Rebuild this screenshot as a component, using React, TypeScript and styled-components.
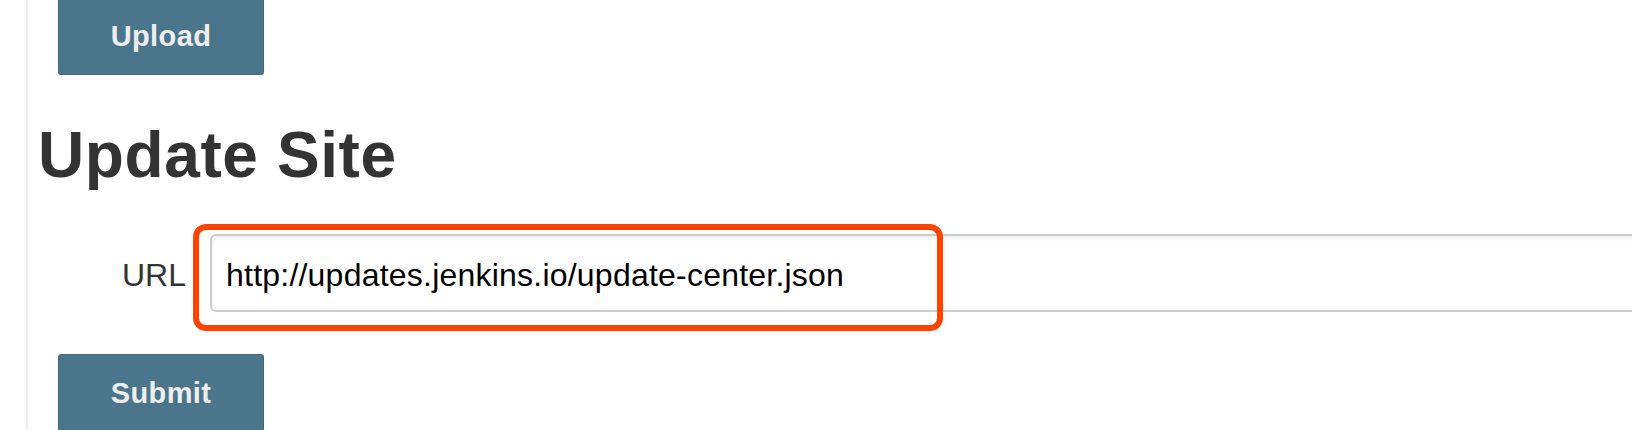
import React from "react";
import styled, { createGlobalStyle } from "styled-components";

const GlobalStyle = createGlobalStyle`
  html, body {
    margin: 0;
    padding: 0;
    background: #ffffff;
  }
  body {
    font-family: "Liberation Sans", Arial, Helvetica, sans-serif;
    overflow: hidden;
  }
`;

const Page = styled.div`
  height: 430px;
  overflow: hidden;
  padding-left: 26px;
  box-sizing: border-box;
`;

const Main = styled.main`
  height: 100%;
  border-left: 2px solid #eeeeee;
  padding-left: 10px;
  box-sizing: border-box;
  display: flex;
  flex-direction: column;
  align-items: flex-start;
`;

const Button = styled.button<{ $offset: number }>`
  box-sizing: border-box;
  width: 206px;
  height: 78px;
  flex: none;
  margin: ${(p) => p.$offset}px 0 0 20px;
  background: #4b758b;
  border: 1px solid #44697d;
  border-radius: 3px;
  color: #eeeeee;
  font-family: "Liberation Sans", Arial, Helvetica, sans-serif;
  font-weight: bold;
  font-size: 29px;
  letter-spacing: 0.4px;
  line-height: 32px;
  display: flex;
  align-items: center;
  justify-content: center;
  padding: 0;
  cursor: pointer;
`;

const Heading = styled.h1`
  margin: 48px 0 0 0;
  font-family: "Liberation Sans", Arial, Helvetica, sans-serif;
  font-weight: bold;
  font-size: 64px;
  letter-spacing: 0.6px;
  line-height: 64px;
  color: #333333;
`;

const Row = styled.div`
  display: flex;
  align-items: baseline;
  margin-top: 47px;
`;

const Label = styled.label`
  margin-left: 84px;
  margin-right: 24px;
  font-size: 32px;
  line-height: 32px;
  color: #333333;
`;

const Field = styled.div`
  position: relative;
  flex: none;
`;

const Input = styled.input`
  box-sizing: border-box;
  width: 1460px;
  height: 78px;
  border: 2px solid #cccccc;
  border-radius: 6px;
  padding: 4px 14px 0 14px;
  font-family: "Liberation Sans", Arial, Helvetica, sans-serif;
  font-size: 32px;
  letter-spacing: 0.22px;
  line-height: 32px;
  color: #000000;
  background: #ffffff;
  box-shadow: inset 0 2px 4px rgba(0, 0, 0, 0.07);
  outline: none;
`;

const Highlight = styled.div`
  position: absolute;
  left: -17px;
  top: -10px;
  width: 750px;
  height: 107px;
  box-sizing: border-box;
  border: 6px solid #fe4300;
  border-radius: 13px;
  pointer-events: none;
`;

export default function App() {
  return (
    <>
      <GlobalStyle />
      <Page>
        <Main>
          <Button $offset={-3}>Upload</Button>
          <Heading>Update Site</Heading>
          <Row>
            <Label htmlFor="site-url">URL</Label>
            <Field>
              <Input
                id="site-url"
                type="text"
                defaultValue="http://updates.jenkins.io/update-center.json"
              />
              <Highlight />
            </Field>
          </Row>
          <Button $offset={42}>Submit</Button>
        </Main>
      </Page>
    </>
  );
}
